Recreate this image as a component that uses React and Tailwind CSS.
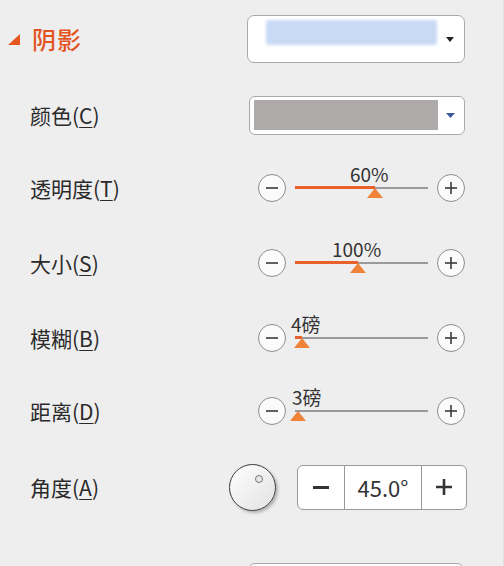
import React from 'react';

const FONT = { fontFamily: '"Noto Sans CJK SC", "Noto Sans", sans-serif' };

function Label({ text, hotkey }) {
  return (
    <div className="w-[247px] pl-[30px] text-[21px] text-[#2a2a2a] leading-none">
      {text}(<span className="underline underline-offset-[3px] decoration-1">{hotkey}</span>)
    </div>
  );
}

function CircleButton({ plus }) {
  return (
    <div className="w-[28px] h-[28px] rounded-full border border-[#8d8d8d] bg-[#fbfbfb] flex items-center justify-center shrink-0">
      <svg width="14" height="14" viewBox="0 0 14 14">
        <path d="M1 7h12" stroke="#3a3a3a" strokeWidth="1.6" />
        {plus && <path d="M7 1v12" stroke="#3a3a3a" strokeWidth="1.6" />}
      </svg>
    </div>
  );
}

function SliderRow({ text, hotkey, value, pos, labelLeft }) {
  return (
    <div className="flex items-center h-full">
      <Label text={text} hotkey={hotkey} />
      <div className="flex items-center pl-[11px]">
        <CircleButton />
        <div className="relative w-[133px] h-[28px] mx-[9px]">
          <div className="absolute left-0 right-0 top-[13px] h-[2px] bg-[#9a9a9e]" />
          {pos > 4 && (
            <div className="absolute left-0 top-[12px] h-[3px] bg-[#e8602a]" style={{ width: pos }} />
          )}
          <svg className="absolute top-[14px]" style={{ left: pos - 8 }} width="16" height="10" viewBox="0 0 16 10">
            <path d="M8 0L16 10H0Z" fill="#f0823a" />
          </svg>
          <div
            className="absolute top-[-10px] text-[19px] leading-none text-[#333] whitespace-nowrap"
            style={{ left: labelLeft }}
          >
            {value}
          </div>
        </div>
        <CircleButton plus />
      </div>
    </div>
  );
}

export default function App() {
  return (
    <div style={FONT} className="w-[504px] h-[566px] overflow-hidden bg-[#efeeef] border-r border-[#e2e1e2]">
      {/* title */}
      <div className="flex items-center h-[78px]">
        <div className="w-[247px] flex items-center pl-[8px]">
          <svg width="12" height="11" viewBox="0 0 12 11">
            <path d="M12 0V11H0Z" fill="#e6561f" />
          </svg>
          <span className="ml-[12px] text-[24px] font-medium text-[#e3541e] leading-none tracking-[1px]">阴影</span>
        </div>
        <div className="w-[218px] h-[48px] rounded-[7px] border border-[#a9a9a9] bg-white flex items-center pl-[18px] pr-[10px]">
          <div className="w-[171px] h-[25px] -mt-[14px] rounded-[3px] bg-[#c8daf5] blur-[1.5px]" />
          <div className="flex-1" />
          <svg width="8" height="5" viewBox="0 0 8 5">
            <path d="M0 0H8L4 5Z" fill="#222" />
          </svg>
        </div>
      </div>

      {/* colour */}
      <div className="flex items-center h-[74px]">
        <Label text="颜色" hotkey="C" />
        <div className="ml-[2px] w-[216px] h-[39px] rounded-[6px] border border-[#a9a9a9] bg-white flex items-center pl-[4px] pr-[9px]">
          <div className="w-[184px] h-[30px] bg-[#aeaaaa]" />
          <div className="flex-1" />
          <svg width="9" height="5" viewBox="0 0 9 5">
            <path d="M0 0H9L4.5 5Z" fill="#3c5aa0" />
          </svg>
        </div>
      </div>

      <div className="h-[72px]">
        <SliderRow text="透明度" hotkey="T" value="60%" pos={80} labelLeft={55} />
      </div>
      <div className="h-[78px]">
        <SliderRow text="大小" hotkey="S" value="100%" pos={63} labelLeft={37} />
      </div>
      <div className="h-[72px]">
        <SliderRow text="模糊" hotkey="B" value="4磅" pos={7} labelLeft={-4} />
      </div>
      <div className="h-[74px]">
        <SliderRow text="距离" hotkey="D" value="3磅" pos={3} labelLeft={-3} />
      </div>

      {/* angle */}
      <div className="flex items-center h-[78px]">
        <Label text="角度" hotkey="A" />
        <div className="relative ml-[-18px] w-[47px] h-[47px] rounded-full border border-[#3a3a3a] bg-gradient-to-br from-white to-[#e2e2e2] shadow-[2px_2px_3px_rgba(0,0,0,0.25)] shrink-0">
          <div className="absolute left-[25px] top-[10px] w-[8px] h-[8px] rounded-full border border-[#777] bg-[#e8e8e8]" />
        </div>
        <div className="ml-[21px] w-[170px] h-[45px] rounded-[6px] border border-[#9a9a9a] bg-white flex">
          <div className="w-[46px] flex items-center justify-center">
            <div className="w-[16px] h-[3px] bg-[#333]" />
          </div>
          <div className="w-[78px] border-x border-[#9a9a9a] flex items-center justify-center text-[22px] text-[#333] leading-none">
            45.0°
          </div>
          <div className="flex-1 flex items-center justify-center">
            <svg width="16" height="16" viewBox="0 0 16 16">
              <path d="M0 8H16M8 0V16" stroke="#333" strokeWidth="2.6" />
            </svg>
          </div>
        </div>
      </div>

      {/* next control, cut off */}
      <div className="mt-[37px] ml-[248px] w-[216px] h-[30px] rounded-t-[7px] border border-[#a9a9a9] bg-white" />
    </div>
  );
}
